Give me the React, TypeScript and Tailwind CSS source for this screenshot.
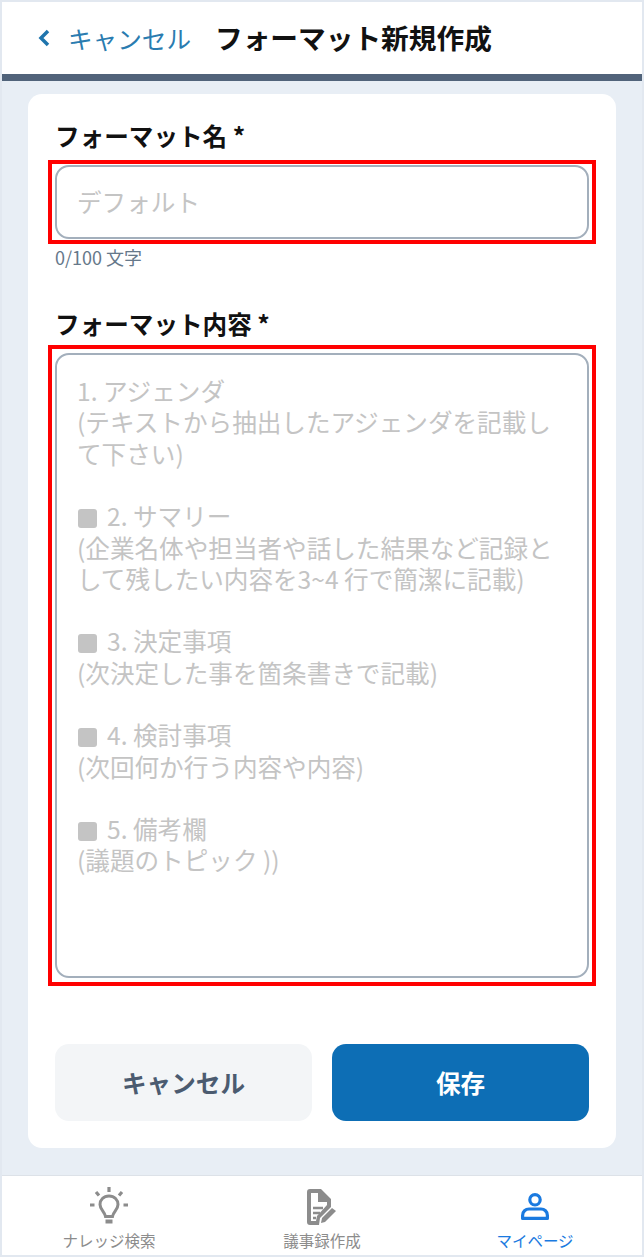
import React from 'react';

const Square = () => (
  <span className="inline-block w-[19px] h-[19px] rounded-[3px] bg-[#c4c4c4] mr-[10px] ml-[1px] align-[-2px]" />
);

function BulbIcon() {
  return (
    <svg width="38" height="38" viewBox="0 0 38 38" fill="none" stroke="#8c8c8c" strokeWidth="3">
      <path d="M19 9c-5.500 0-9 3.800-9 8.500 0 5 4.500 7 5.500 12h7c1-5 5.500-7 5.500-12C28 12.800 24.500 9 19 9z" />
      <path d="M15.500 34.500h7" strokeWidth="4" />
      <path d="M19 0v5M6 5l3 3.500M32 5l-3 3.500M0 18h4.500M33.500 18H38" strokeWidth="3.200" />
    </svg>
  );
}

function DocIcon() {
  return (
    <svg width="30" height="36" viewBox="0 0 30 36" fill="none">
      <path d="M3 0h11l10 10v8L13 29l-1 7H3a3 3 0 0 1-3-3V3a3 3 0 0 1 3-3z" fill="#8c8c8c" />
      <path d="M4 4h7v9h9v3L10 27l-1 5H4z" fill="#fff" />
      <path d="M6 19h10M6 24h7M6 29h3" stroke="#8c8c8c" strokeWidth="2.500" />
      <path d="M14 34l1-5 10-10 4 3-11 11z" fill="#8c8c8c" />
    </svg>
  );
}

function UserIcon() {
  return (
    <svg width="28" height="27" viewBox="0 0 28 27" fill="none" stroke="#1a7ae0" strokeWidth="3.200">
      <circle cx="14" cy="6.800" r="5.200" />
      <path d="M1.600 25.400v-3c0-3.800 3-6.400 6.400-6.400h12c3.400 0 6.400 2.600 6.400 6.400v3z" strokeLinejoin="round" />
    </svg>
  );
}

export default function App() {
  return (
    <div
      className="w-[644px] h-[1257px] flex flex-col border-2 border-[#e2e8f0] bg-white text-[24.6px] overflow-hidden"
      style={{ fontFamily: '"Noto Sans CJK JP", "Noto Sans", sans-serif' }}
    >
      {/* Header */}
      <header className="h-[72px] shrink-0 flex items-center pl-[35px]">
        <svg width="14" height="20" viewBox="0 0 14 20" fill="none" stroke="#1f75ad" strokeWidth="3.500">
          <path d="M11 3l-7 7 7 7" />
        </svg>
        <span className="ml-[17px] text-[#2a7cb0] leading-none">キャンセル</span>
        <span className="ml-[24px] font-bold text-[#111] text-[27.7px] leading-none">フォーマット新規作成</span>
      </header>
      <div className="h-[7px] shrink-0 bg-[#51637a]" />

      {/* Body */}
      <main className="flex-1 bg-[#e8eef5] px-[26px] pt-[13px]">
        <div className="h-[1054px] rounded-[14px] bg-white px-[27px] pt-[25px]">
          <label className="block font-bold text-[#111] leading-[32px]">フォーマット名 *</label>
          <div className="mt-[9px] -mx-[7px] border-[4px] border-[#ff0000] px-[3px] py-[1px]">
            <div className="h-[74px] rounded-[14px] border-2 border-[#a3afbc] flex items-center px-[20px] pb-[2px] text-[#c4c4c4]">
              デフォルト
            </div>
          </div>
          <p className="mt-0 text-[18px] leading-[26px] text-[#66788a]">0/100 文字</p>

          <label className="block mt-[37px] font-bold text-[#111] leading-[32px]">フォーマット内容 *</label>
          <div className="mt-[6px] -mx-[7px] border-[4px] border-[#ff0000] px-[3px] py-[4px]">
            <div className="h-[625px] rounded-[14px] border-2 border-[#a3afbc] px-[20px] pt-[20px] text-[#c4c4c4] leading-[31.4px]">
              <p>1. アジェンダ</p>
              <p>(テキストから抽出したアジェンダを記載し</p>
              <p>て下さい)</p>
              <p className="mt-[31px]"><Square />2. サマリー</p>
              <p>(企業名体や担当者や話した結果など記録と</p>
              <p>して残したい内容を3~4 行で簡潔に記載)</p>
              <p className="mt-[31px]"><Square />3. 決定事項</p>
              <p>(次決定した事を箇条書きで記載)</p>
              <p className="mt-[31px]"><Square />4. 検討事項</p>
              <p>(次回何か行う内容や内容)</p>
              <p className="mt-[31px]"><Square />5. 備考欄</p>
              <p>(議題のトピック ))</p>
            </div>
          </div>

          <div className="mt-[58px] flex gap-[20px]">
            <button className="flex-1 h-[77px] rounded-[14px] bg-[#f3f5f7] font-bold text-[#4b5b70]">キャンセル</button>
            <button className="flex-1 h-[77px] rounded-[14px] bg-[#0d6eb5] font-bold text-white">保存</button>
          </div>
        </div>
      </main>

      {/* Bottom nav */}
      <nav className="h-[80px] shrink-0 border-t border-[#dde2e8] flex text-[15.5px] leading-[20px]">
        <div className="w-[214px] flex flex-col items-center justify-end pb-[5px] text-[#8c8c8c]">
          <BulbIcon />
          <span className="mt-[5px]">ナレッジ検索</span>
        </div>
        <div className="flex-1 flex flex-col items-center justify-end pb-[5px] text-[#8c8c8c]">
          <DocIcon />
          <span className="mt-[5px]">議事録作成</span>
        </div>
        <div className="w-[214px] flex flex-col items-center justify-end pb-[5px] text-[#1a7ae0]">
          <UserIcon />
          <span className="mt-[10px]">マイページ</span>
        </div>
      </nav>
    </div>
  );
}
